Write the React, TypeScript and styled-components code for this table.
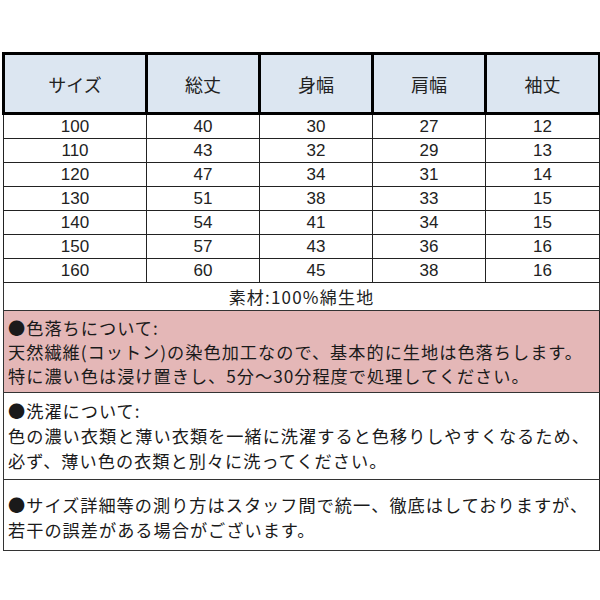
import styled, { createGlobalStyle } from "styled-components";

const GlobalStyle = createGlobalStyle`
  body {
    margin: 0;
    background: #fff;
    font-family: "Liberation Sans", "Noto Sans CJK JP", sans-serif;
    color: #111;
  }
`;

const Page = styled.div`
  width: 600px;
  height: 600px;
  padding: 52px 0 0 2px;
  box-sizing: border-box;
`;

const SizeTable = styled.table`
  width: 596px;
  border-collapse: collapse;
  table-layout: fixed;
`;

const Col = styled.col<{ $w: number }>`
  width: ${(p) => p.$w}px;
`;

const HeadCell = styled.th`
  height: 57px;
  padding: 0;
  background: #dce6f1;
  border: 3px solid #000;
  font-weight: normal;
  font-size: 18px;
  font-family: "Noto Sans CJK JP", sans-serif;
  color: #222;
  text-align: center;
`;

const Cell = styled.td`
  height: 23px;
  padding: 0;
  border: 1px solid #222;
  font-size: 17px;
  line-height: 23px;
  text-align: center;
  color: #222;
`;

const MaterialCell = styled.td`
  height: 27px;
  padding: 0;
  border: 1px solid #333;
  font-size: 17px;
  letter-spacing: 1.2px;
  text-align: center;
  font-family: "Noto Sans CJK JP", sans-serif;
  color: #222;
`;

const NoteCell = styled.td<{ $pink?: boolean; $lh: number; $pt: number; $pb: number }>`
  padding: ${(p) => `${p.$pt}px 4px ${p.$pb}px 4px`};
  border: 1px solid #333;
  border-right-color: #222;
  background: ${(p) => (p.$pink ? "#e4b7b7" : "#fff")};
  font-family: "Noto Sans CJK JP", sans-serif;
  font-size: 17.2px;
  letter-spacing: 1px;
  line-height: ${(p) => p.$lh}px;
  text-align: left;
  color: #1a1a1a;
  white-space: nowrap;
`;

const NoteLine = styled.div``;

const headers = ["サイズ", "総丈", "身幅", "肩幅", "袖丈"];
const widths = [143, 113, 113, 113, 114];

const rows = [
  [100, 40, 30, 27, 12],
  [110, 43, 32, 29, 13],
  [120, 47, 34, 31, 14],
  [130, 51, 38, 33, 15],
  [140, 54, 41, 34, 15],
  [150, 57, 43, 36, 16],
  [160, 60, 45, 38, 16],
];

const notes = [
  {
    pink: true,
    lh: 24,
    pt: 5,
    pb: 4,
    lines: [
      "●色落ちについて:",
      "天然繊維(コットン)の染色加工なので、基本的に生地は色落ちします。",
      "特に濃い色は浸け置きし、5分〜30分程度で処理してください。",
    ],
  },
  {
    pink: false,
    lh: 25,
    pt: 5,
    pb: 6,
    lines: [
      "●洗濯について:",
      "色の濃い衣類と薄い衣類を一緒に洗濯すると色移りしやすくなるため、",
      "必ず、薄い色の衣類と別々に洗ってください。",
    ],
  },
  {
    pink: false,
    lh: 25,
    pt: 12,
    pb: 8,
    lines: [
      "●サイズ詳細等の測り方はスタッフ間で統一、徹底はしておりますが、",
      "若干の誤差がある場合がございます。",
    ],
  },
];

export default function App() {
  return (
    <Page>
      <GlobalStyle />
      <SizeTable>
        <colgroup>
          {widths.map((w, i) => (
            <Col key={i} $w={w} />
          ))}
        </colgroup>
        <thead>
          <tr>
            {headers.map((h) => (
              <HeadCell key={h}>{h}</HeadCell>
            ))}
          </tr>
        </thead>
        <tbody>
          {rows.map((r) => (
            <tr key={r[0]}>
              {r.map((v, i) => (
                <Cell key={i}>{v}</Cell>
              ))}
            </tr>
          ))}
          <tr>
            <MaterialCell colSpan={5}>素材:100%綿生地</MaterialCell>
          </tr>
          {notes.map((n, i) => (
            <tr key={i}>
              <NoteCell colSpan={5} $pink={n.pink} $lh={n.lh} $pt={n.pt} $pb={n.pb}>
                {n.lines.map((l) => (
                  <NoteLine key={l}>{l}</NoteLine>
                ))}
              </NoteCell>
            </tr>
          ))}
        </tbody>
      </SizeTable>
    </Page>
  );
}
